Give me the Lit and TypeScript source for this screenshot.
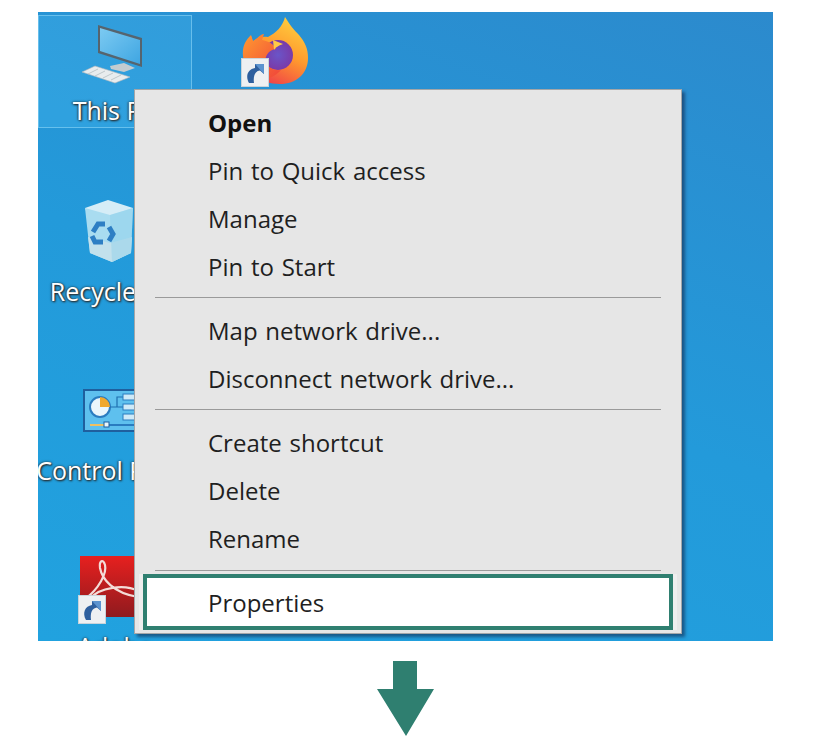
import { LitElement, html, css, svg } from "lit";
import { customElement } from "lit/decorators.js";

const shortcut = svg`
  <rect x="0.5" y="0.5" width="27" height="28" fill="#eef0f2" stroke="#c9d3da"/>
  <path d="M8 25 C4 18 7 11 14 10 L14 6 L23 6 L23 16 L19 12.5 C14 13 12 18 13 25 Z" fill="#2e5f9e"/>
  <path d="M14 6 L23 6 L23 16 Z" fill="#5c93cf"/>`;

@customElement("app-root")
export class AppRoot extends LitElement {
  static styles = css`
    :host { display: block; width: 822px; height: 753px; background: #fff; overflow: hidden;
      font-family: "Open Sans", "Noto Sans", sans-serif; }
    .page { display: flex; flex-direction: column; align-items: center; padding: 12px 11px 0 0; }
    .desktop { position: relative; width: 735px; height: 629px; overflow: hidden;
      background: linear-gradient(200deg, #2c8acd 0%, #239ada 52%, #21a2df 100%); }
    .column { display: flex; flex-direction: column; width: 154px; padding-top: 3px; }
    .tile { box-sizing: border-box; width: 154px; height: 180px; display: flex; flex-direction: column; align-items: center; }
    .tile svg { display: block; flex: none; overflow: visible; }
    .selected { height: 113px; margin-bottom: 67px; background: rgba(90,205,255,.2);
      border: 1px solid rgba(170,230,255,.45); }
    .label { color: #fff; font-size: 25px; line-height: 32px; white-space: nowrap;
      text-shadow: 1px 1px 2px #2a2320, -1px 0 1px rgba(90,60,30,.55), 0 0 3px rgba(0,0,0,.55); }
    .fox { position: absolute; left: 202px; top: 4px; }
    .menu { position: absolute; left: 96px; top: 77px; box-sizing: border-box; width: 548px; height: 545px;
      padding: 9px 0 0; background: #e6e6e6; border: 1px solid #a3a6a8;
      box-shadow: 3px 3px 3px rgba(20,50,90,.65); color: #1f1f1f; font-size: 24px; word-spacing: 1.5px; }
    .row { height: 48px; line-height: 48px; padding-left: 73px; }
    .open { font-weight: 700; color: #111; }
    .sep { height: 1px; margin: 6px 20px 9px; background: #9a9a9a; }
    .sep.last { margin: 7px 20px 3px; }
    .hl { box-sizing: border-box; height: 56px; line-height: 50px; margin: 0 8px; padding-left: 61px;
      background: #fff; border: 4px solid #2f7f70; box-shadow: 4px 0 0 #eeeeee, -4px 0 0 #eeeeee; }
    .arrow { display: block; margin-top: 19px; }
  `;

  render() {
    return html`<div class="page">
      <div class="desktop">
        <div class="column">
          <div class="tile selected">
            <svg width="70" height="78" viewBox="0 0 70 78">
              <defs><linearGradient id="scr" x1="0" y1="0" x2="1" y2="1"><stop offset="0" stop-color="#7ccaf2"/><stop offset="1" stop-color="#3fa6e2"/></linearGradient></defs>
              <path d="M30 50 L44 47 L55 52 L44 56 L31 53 Z" fill="#c4ccd0"/>
              <path d="M2 56 L15 50 L50 61 L35 67 Z" fill="#e8ecee" stroke="#aeb6ba" stroke-width=".6"/>
              <path d="M8 58 L18 53 M15 60 L25 55 M23 62 L33 57 M31 64 L41 59" stroke="#b4bcc0" stroke-width=".8"/>
              <path d="M18 9 L62 22 L62 51 L18 37 Z" fill="#56646e"/>
              <path d="M20 12 L60 24 L60 48 L20 35 Z" fill="url(#scr)"/>
            </svg>
            <div class="label">This PC</div>
          </div>
          <div class="tile">
            <svg width="70" height="80" viewBox="0 0 70 80">
              <path d="M5 13 L28 5 L53 13 L50 26 L10 26 Z" fill="#d5edf7"/>
              <path d="M5 13 L30 20 L53 13 L51 58 L32 67 L10 58 Z" fill="#a9dcf0"/>
              <path d="M8 42 L30 48 L52 42 L51 58 L32 67 L10 58 Z" fill="#c3e1ec"/>
              <path d="M30 20 L32 67 L51 58 L53 13 Z" fill="#8fd0ea" opacity=".45"/>
              <g fill="none" stroke="#2e7fc4" stroke-width="5">
                <path d="M13 37 L18 29 L25 29"/>
                <path d="M29 32 L33 39 L29 46"/>
                <path d="M23 47 L15 47 L12 41"/>
              </g>
            </svg>
            <div class="label">Recycle Bin</div>
          </div>
          <div class="tile">
            <svg width="70" height="79" viewBox="0 0 70 79">
              <rect x="4" y="15" width="58" height="41" fill="#5ec0ee" stroke="#1f5f9e" stroke-width="2"/>
              <circle cx="20" cy="32" r="10" fill="#eaf6fc" stroke="#2a7cc0" stroke-width="2"/>
              <path d="M20 22 A10 10 0 0 1 30 32 L20 32 Z" fill="#f0a82e"/>
              <path d="M30 32 H37 V22 H43 M37 32 H43" fill="none" stroke="#1f6fb0" stroke-width="1.2"/>
              <rect x="43" y="19" width="14" height="6" fill="#cfeaf8" stroke="#2a7cc0"/>
              <rect x="43" y="29" width="14" height="6" fill="#cfeaf8" stroke="#2a7cc0"/>
              <rect x="43" y="39" width="14" height="6" fill="#cfeaf8" stroke="#2a7cc0"/>
              <path d="M10 50 H24" stroke="#f0c060" stroke-width="2"/>
              <path d="M28 50 H56" stroke="#2a7cc0" stroke-width="2"/>
              <rect x="24" y="47" width="5" height="5" fill="#e8f6fc" stroke="#1f5f9e"/>
            </svg>
            <div class="label">Control Panel</div>
          </div>
          <div class="tile">
            <svg width="70" height="75" viewBox="0 0 70 75">
              <defs><linearGradient id="red" x1="0" y1="0" x2="0" y2="1"><stop offset="0" stop-color="#e7201f"/><stop offset="1" stop-color="#8f1a1e"/></linearGradient></defs>
              <rect x="0" y="1" width="60" height="61" fill="url(#red)"/>
              <path d="M5 44 C19 34 27 18 25 10 C23 3 19 6 20 13 C22 24 33 38 58 42 M10 44 C19 32 45 29 58 36" fill="none" stroke="#f4dcd8" stroke-width="2.2"/>
              <g transform="translate(-2,40)">${shortcut}</g>
            </svg>
            <div class="label">Adobe</div>
          </div>
        </div>
        <svg class="fox" width="72" height="72" viewBox="0 0 72 72">
          <defs>
            <linearGradient id="fl" x1="0.8" y1="0" x2="0.3" y2="1"><stop offset="0" stop-color="#ffd23f"/><stop offset=".5" stop-color="#ff9a2e"/><stop offset="1" stop-color="#ee3a4a"/></linearGradient>
            <linearGradient id="fx" x1="0" y1="0" x2="1" y2="1"><stop offset="0" stop-color="#ff9a30"/><stop offset="1" stop-color="#f0443a"/></linearGradient>
            <radialGradient id="gl"><stop offset="0" stop-color="#6a55c8"/><stop offset="1" stop-color="#7a3aa8"/></radialGradient>
          </defs>
          <path d="M45 1 C50 9 54 14 59 19 C65 26 68 33 68 42 C68 58 56 68 40 68 C22 68 8 60 4 44 C2 34 5 26 11 20 L13 26 C17 21 23 20 28 21 C36 17 43 10 45 1 Z" fill="url(#fl)"/>
          <circle cx="38" cy="39" r="15" fill="url(#gl)"/>
          <path d="M3 40 C2 30 6 24 11 19 L13 25 C18 22 21 18 24 18 L22 24 C28 25 34 28 36 33 C30 33 24 40 26 46 C28 52 34 55 41 54 C36 60 26 66 16 60 C9 56 4 48 3 40 Z" fill="url(#fx)"/>
          <path d="M33 24 L43 28 C38 30 36 31 34 34 Z" fill="#ffcb45"/>
          <g transform="translate(1,42)">${shortcut}</g>
        </svg>
        <div class="menu">
          <div class="row open">Open</div>
          <div class="row">Pin to Quick access</div>
          <div class="row">Manage</div>
          <div class="row">Pin to Start</div>
          <div class="sep"></div>
          <div class="row">Map network drive...</div>
          <div class="row">Disconnect network drive...</div>
          <div class="sep"></div>
          <div class="row">Create shortcut</div>
          <div class="row">Delete</div>
          <div class="row">Rename</div>
          <div class="sep last"></div>
          <div class="hl">Properties</div>
        </div>
      </div>
      <svg class="arrow" width="58" height="77" viewBox="0 0 58 77">
        <path d="M16 1 H40 V29 H57 L29 76 L0 29 H16 Z" fill="#2f7f70"/>
      </svg>
    </div>`;
  }
}
